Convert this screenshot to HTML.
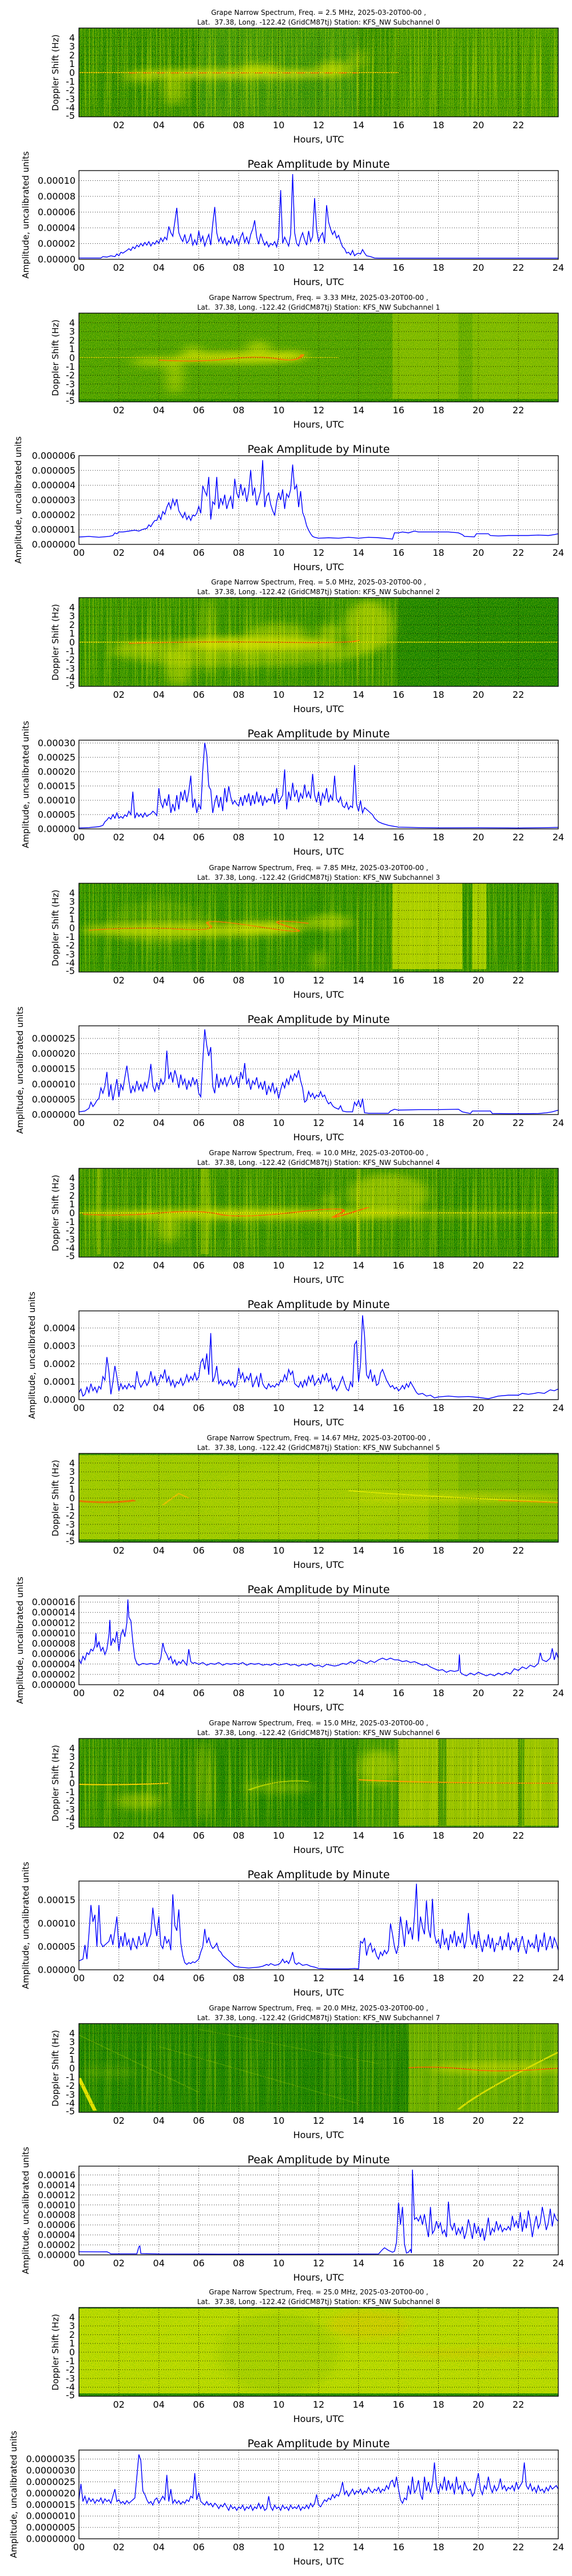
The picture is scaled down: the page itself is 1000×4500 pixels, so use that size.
<!DOCTYPE html>
<html><head><meta charset="utf-8"><style>
html,body{margin:0;padding:0;background:#fff;}
svg{display:block}
text{font-family:"DejaVu Sans","Liberation Sans",sans-serif;fill:#000}
.t1{font-size:12px;text-anchor:middle}
.pt{font-size:19px;text-anchor:middle}
.tk{font-size:16px}
.ye{text-anchor:end}
.xm{text-anchor:middle}
.lb{font-size:15px;text-anchor:middle;dominant-baseline:central}
.hu{font-size:16px;text-anchor:middle}
.g{stroke:#000;stroke-dasharray:1 3;stroke-width:1;fill:none;opacity:.85}
.fr{fill:none;stroke:#000;stroke-width:1.3}
.ln{fill:none;stroke:#0000ff;stroke-width:1.4}
</style></head><body>
<svg width="1000" height="4500" viewBox="0 0 1000 4500" xmlns="http://www.w3.org/2000/svg">
<defs>
<filter id="bl" x="-50%" y="-50%" width="200%" height="200%"><feGaussianBlur stdDeviation="3 6"/></filter>
<filter id="nY" filterUnits="objectBoundingBox" x="0" y="0" width="1" height="1"><feTurbulence type="fractalNoise" baseFrequency="0.8" numOctaves="1" seed="3"/><feColorMatrix values="0 0 0 0 0.85  0 0 0 0 0.87  0 0 0 0 0  2.6 0 0 0 -1.1"/></filter>
<filter id="nG" filterUnits="objectBoundingBox" x="0" y="0" width="1" height="1"><feTurbulence type="fractalNoise" baseFrequency="0.8" numOctaves="1" seed="7"/><feColorMatrix values="0 0 0 0 0.05  0 0 0 0 0.45  0 0 0 0 0  2.6 0 0 0 -1.1"/></filter>
<filter id="sY" filterUnits="objectBoundingBox" x="0" y="0" width="1" height="1"><feTurbulence type="fractalNoise" baseFrequency="0.45 0.006" numOctaves="1" seed="11"/><feColorMatrix values="0 0 0 0 0.7  0 0 0 0 0.82  0 0 0 0 0  3 0 0 0 -1.35"/></filter>
</defs>
<rect width="1000" height="4500" fill="#fff"/>

<!-- ================= PAIR 0 ================= -->
<g transform="translate(0,49)">
<text class="t1" x="557" y="-23">Grape Narrow Spectrum, Freq. = 2.5 MHz, 2025-03-20T00-00 ,</text>
<text class="t1" x="557" y="-6">Lat.&#160; 37.38, Long. -122.42 (GridCM87tj) Station: KFS_NW Subchannel 0</text>
<svg x="138" y="0" width="838" height="155" viewBox="0 0 240 155" preserveAspectRatio="none">
<rect width="240" height="155" fill="#167f00"/>
<rect x="60" width="80" height="155" fill="#24890a"/>
<rect x="157" width="83" height="155" fill="#2b8c00"/>
<g filter="url(#bl)">
<ellipse cx="80" cy="80" rx="58" ry="9" fill="#c8dc10" opacity=".75"/>
<ellipse cx="48" cy="105" rx="5" ry="30" fill="#b8d400" opacity=".6"/>
<ellipse cx="90" cy="70" rx="9" ry="8" fill="#d0e000" opacity=".6"/>
<ellipse cx="128" cy="68" rx="9" ry="10" fill="#c8dc00" opacity=".6"/>
<ellipse cx="140" cy="55" rx="3" ry="18" fill="#b8d400" opacity=".5"/>
<ellipse cx="30" cy="88" rx="8" ry="8" fill="#a0c800" opacity=".5"/>
</g>
<rect x="0" y="77" width="160" height="1.5" fill="#ffd000"/>
<path d="M25 78.5H140" stroke="#ff5a00" stroke-width="1.5" stroke-dasharray="4 3"/>
</svg>
<rect x="138" width="838" height="155" filter="url(#sY)" opacity=".5"/>
<rect x="138" width="838" height="155" filter="url(#nY)" opacity=".6"/>
<g transform="translate(138,0)"><path class="g" d="M69.8 0V155M139.7 0V155M209.5 0V155M279.3 0V155M349.2 0V155M419 0V155M488.8 0V155M558.7 0V155M628.5 0V155M698.3 0V155M768.2 0V155M0 16.8H838M0 32.1H838M0 47.4H838M0 62.7H838M0 78H838M0 93.3H838M0 108.6H838M0 123.9H838M0 139.2H838"/></g>
<rect class="fr" x="138" y="0" width="838" height="155"/>
<g class="tk ye"><text x="131" y="22.3">4</text><text x="131" y="37.6">3</text><text x="131" y="52.9">2</text><text x="131" y="68.2">1</text><text x="131" y="83.5">0</text><text x="131" y="98.8">-1</text><text x="131" y="114.1">-2</text><text x="131" y="129.4">-3</text><text x="131" y="144.7">-4</text><text x="131" y="158.5">-5</text></g>
<g class="tk xm"><text x="207.8" y="175">02</text><text x="277.7" y="175">04</text><text x="347.5" y="175">06</text><text x="417.3" y="175">08</text><text x="487.2" y="175">10</text><text x="557" y="175">12</text><text x="626.8" y="175">14</text><text x="696.7" y="175">16</text><text x="766.5" y="175">18</text><text x="836.3" y="175">20</text><text x="906.2" y="175">22</text></g>
<text class="hu" x="557" y="200">Hours, UTC</text>
<text class="lb" transform="translate(97,78) rotate(-90)">Doppler Shift (Hz)</text>
<g transform="translate(0,249)">
<text class="pt" x="557" y="-5">Peak Amplitude by Minute</text>
<rect x="138" width="838" height="155" fill="#fff"/>
<g transform="translate(138,0)"><path class="g" d="M69.8 0V155M139.7 0V155M209.5 0V155M279.3 0V155M349.2 0V155M419 0V155M488.8 0V155M558.7 0V155M628.5 0V155M698.3 0V155M768.2 0V155M0 127.5H838M0 100H838M0 72.5H838M0 45H838M0 17.5H838"/></g>
<svg x="138" y="0" width="838" height="155" viewBox="0 0 240 100" preserveAspectRatio="none"><polyline class="ln" vector-effect="non-scaling-stroke" points="0,98.5 11,98.5 12,97 14,97.5 16,96 18,97 19,94 20,96 21,92 22,93 24,90 25,88 26,90 27,86 28,88 29,84 30,86 31,82 32,85 33,81 34,84 35,80 36,85 37,81 38,83 39,79 40,82 41,76 42,80 43,75 44,78 45,63 46,70 47,74 48,58 49,42 50,70 51,76 52,80 53,72 54,82 55,79 56,71 57,84 58,78 59,84 60,68 61,80 62,74 63,85 64,78 65,72 66,84 67,60 68,41 69,70 70,80 71,75 72,82 73,76 74,84 75,79 76,82 77,73 78,82 79,77 80,84 81,75 82,70 83,81 84,75 85,83 86,72 87,66 88,56 89,75 90,83 91,71 92,78 93,84 94,80 95,86 96,82 97,84 98,80 99,86 100,75 101,22 102,82 103,75 104,80 105,85 106,72 107,4 108,70 109,82 110,85 111,76 112,70 113,78 114,84 115,68 116,80 117,74 118,31 119,66 120,80 121,74 122,70 123,82 124,39 125,58 126,66 127,72 128,68 129,76 130,73 131,80 132,86 133,88 134,93 135,92 136,95 137,90 138,96 139,94 140,93 141,94 142,89 143,93 144,96 146,97 148,98.5 150,98.7 240,98.7"/></svg>
<rect class="fr" x="138" y="0" width="838" height="155"/>
<g class="tk ye"><text x="132" y="160.5">0.00000</text><text x="132" y="133">0.00002</text><text x="132" y="105.5">0.00004</text><text x="132" y="78">0.00006</text><text x="132" y="50.5">0.00008</text><text x="132" y="23">0.00010</text></g>
<g class="tk xm"><text x="138" y="175">00</text><text x="207.8" y="175">02</text><text x="277.7" y="175">04</text><text x="347.5" y="175">06</text><text x="417.3" y="175">08</text><text x="487.2" y="175">10</text><text x="557" y="175">12</text><text x="626.8" y="175">14</text><text x="696.7" y="175">16</text><text x="766.5" y="175">18</text><text x="836.3" y="175">20</text><text x="906.2" y="175">22</text><text x="976" y="175">24</text></g>
<text class="hu" x="557" y="200">Hours, UTC</text>
<text class="lb" transform="translate(45,77.5) rotate(-90)">Amplitude, uncalibrated units</text>
</g>
</g>

<!-- ================= PAIR 1 ================= -->
<g transform="translate(0,547)">
<text class="t1" x="557" y="-23">Grape Narrow Spectrum, Freq. = 3.33 MHz, 2025-03-20T00-00 ,</text>
<text class="t1" x="557" y="-6">Lat.&#160; 37.38, Long. -122.42 (GridCM87tj) Station: KFS_NW Subchannel 1</text>
<svg x="138" y="0" width="838" height="155" viewBox="0 0 240 155" preserveAspectRatio="none">
<rect width="240" height="155" fill="#3f9700"/>
<rect x="157" width="83" height="155" fill="#78b400"/>
<rect x="190" width="7" height="155" fill="#5aa400"/>
<g filter="url(#bl)">
<ellipse cx="40" cy="85" rx="14" ry="8" fill="#c0d800" opacity=".7"/>
<ellipse cx="48" cy="110" rx="4" ry="32" fill="#c8dc00" opacity=".6"/>
<ellipse cx="80" cy="78" rx="32" ry="10" fill="#e0e400" opacity=".8"/>
<ellipse cx="90" cy="62" rx="6" ry="14" fill="#d4e000" opacity=".6"/>
<ellipse cx="57" cy="68" rx="5" ry="12" fill="#c8dc00" opacity=".6"/>
<ellipse cx="105" cy="74" rx="10" ry="8" fill="#e0e400" opacity=".7"/>
</g>
<rect x="0" y="150" width="240" height="5" fill="#127a00"/>
<rect x="0" y="77" width="130" height="1" fill="#e8e000"/>
<path d="M40 82Q60 86 75 80T100 80T112 72" stroke="#ff7000" stroke-width="2" fill="none"/>
</svg>
<rect x="138" width="838" height="155" filter="url(#nY)" opacity=".6"/>
<rect x="138" width="838" height="155" filter="url(#nG)" opacity=".4"/>
<g transform="translate(138,0)"><path class="g" d="M69.8 0V155M139.7 0V155M209.5 0V155M279.3 0V155M349.2 0V155M419 0V155M488.8 0V155M558.7 0V155M628.5 0V155M698.3 0V155M768.2 0V155M0 16.8H838M0 32.1H838M0 47.4H838M0 62.7H838M0 78H838M0 93.3H838M0 108.6H838M0 123.9H838M0 139.2H838"/></g>
<rect class="fr" x="138" y="0" width="838" height="155"/>
<g class="tk ye"><text x="131" y="22.3">4</text><text x="131" y="37.6">3</text><text x="131" y="52.9">2</text><text x="131" y="68.2">1</text><text x="131" y="83.5">0</text><text x="131" y="98.8">-1</text><text x="131" y="114.1">-2</text><text x="131" y="129.4">-3</text><text x="131" y="144.7">-4</text><text x="131" y="158.5">-5</text></g>
<g class="tk xm"><text x="207.8" y="175">02</text><text x="277.7" y="175">04</text><text x="347.5" y="175">06</text><text x="417.3" y="175">08</text><text x="487.2" y="175">10</text><text x="557" y="175">12</text><text x="626.8" y="175">14</text><text x="696.7" y="175">16</text><text x="766.5" y="175">18</text><text x="836.3" y="175">20</text><text x="906.2" y="175">22</text></g>
<text class="hu" x="557" y="200">Hours, UTC</text>
<text class="lb" transform="translate(97,78) rotate(-90)">Doppler Shift (Hz)</text>
<g transform="translate(0,249)">
<text class="pt" x="557" y="-5">Peak Amplitude by Minute</text>
<rect x="138" width="838" height="155" fill="#fff"/>
<g transform="translate(138,0)"><path class="g" d="M69.8 0V155M139.7 0V155M209.5 0V155M279.3 0V155M349.2 0V155M419 0V155M488.8 0V155M558.7 0V155M628.5 0V155M698.3 0V155M768.2 0V155M0 129.2H838M0 103.3H838M0 77.5H838M0 51.7H838M0 25.8H838"/></g>
<svg x="138" y="0" width="838" height="155" viewBox="0 0 240 100" preserveAspectRatio="none"><polyline class="ln" vector-effect="non-scaling-stroke" points="0,91.7 5,91 10,92 15,91 17,90 18,87 19,88 20,86 22,86 25,85 28,84 30,85 32,83 34,82 35,78 36,80 37,76 38,73 39,73 40,67 41,72 42,63 43,66 44,58 45,53 46,60 47,49 48,56 49,49 50,62 51,66 52,70 53,64 54,72 55,68 56,73 57,67 58,68 59,65 60,57 61,65 62,34 63,40 64,45 65,24 66,72 67,52 68,55 69,24 70,60 71,48 72,55 73,44 74,60 75,52 76,46 77,60 78,26 79,42 80,48 81,32 82,45 83,36 84,52 85,40 86,16 87,45 88,36 89,56 90,48 91,40 92,5 93,58 94,46 95,42 96,55 97,62 98,67 99,52 100,42 101,50 102,38 103,60 104,43 105,47 106,38 107,10 108,38 109,33 110,58 111,40 112,64 113,70 114,79 115,84 116,88 117,91 118,92 120,93 125,92.5 130,93 135,92 140,93 145,92 150,92.5 155,93.5 157,94 158,87 160,87 162,86 165,87 168,85 170,86 175,86 180,86 185,86 190,87 192,89 193,91 198,91.5 199,88 205,88 206,90 210,90.5 215,90 220,90 225,90 230,89.5 235,90 238,89 240,88"/></svg>
<rect class="fr" x="138" y="0" width="838" height="155"/>
<g class="tk ye"><text x="132" y="160.5">0.000000</text><text x="132" y="134.7">0.000001</text><text x="132" y="108.8">0.000002</text><text x="132" y="83">0.000003</text><text x="132" y="57.2">0.000004</text><text x="132" y="31.3">0.000005</text><text x="132" y="5.5">0.000006</text></g>
<g class="tk xm"><text x="138" y="175">00</text><text x="207.8" y="175">02</text><text x="277.7" y="175">04</text><text x="347.5" y="175">06</text><text x="417.3" y="175">08</text><text x="487.2" y="175">10</text><text x="557" y="175">12</text><text x="626.8" y="175">14</text><text x="696.7" y="175">16</text><text x="766.5" y="175">18</text><text x="836.3" y="175">20</text><text x="906.2" y="175">22</text><text x="976" y="175">24</text></g>
<text class="hu" x="557" y="200">Hours, UTC</text>
<text class="lb" transform="translate(32,77.5) rotate(-90)">Amplitude, uncalibrated units</text>
</g>
</g>

<!-- ================= PAIR 2 ================= -->
<g transform="translate(0,1044)">
<text class="t1" x="557" y="-23">Grape Narrow Spectrum, Freq. = 5.0 MHz, 2025-03-20T00-00 ,</text>
<text class="t1" x="557" y="-6">Lat.&#160; 37.38, Long. -122.42 (GridCM87tj) Station: KFS_NW Subchannel 2</text>
<svg x="138" y="0" width="838" height="155" viewBox="0 0 240 155" preserveAspectRatio="none">
<rect width="240" height="155" fill="#107e00"/>
<rect x="0" width="160" height="155" fill="#1d8600"/>
<g filter="url(#bl)">
<ellipse cx="80" cy="95" rx="65" ry="25" fill="#9cc600" opacity=".6"/>
<ellipse cx="50" cy="120" rx="6" ry="35" fill="#c0d800" opacity=".6"/>
<ellipse cx="65" cy="70" rx="3" ry="70" fill="#a8cc00" opacity=".5"/>
<ellipse cx="90" cy="80" rx="40" ry="12" fill="#e0e400" opacity=".7"/>
<ellipse cx="100" cy="60" rx="15" ry="15" fill="#b4d000" opacity=".5"/>
<ellipse cx="145" cy="50" rx="12" ry="45" fill="#c8dc00" opacity=".6"/>
<ellipse cx="125" cy="60" rx="6" ry="14" fill="#c0d800" opacity=".5"/>
<ellipse cx="30" cy="85" rx="12" ry="10" fill="#a8cc00" opacity=".5"/>
</g>
<rect x="0" y="77" width="240" height="1.5" fill="#e8e800"/>
<path d="M25 80Q60 76 100 78T140 74" stroke="#ff6000" stroke-width="1.5" fill="none"/>
</svg>
<rect x="138" width="558" height="155" filter="url(#sY)" opacity=".5"/>
<rect x="138" width="838" height="155" filter="url(#nY)" opacity=".5"/>
<g transform="translate(138,0)"><path class="g" d="M69.8 0V155M139.7 0V155M209.5 0V155M279.3 0V155M349.2 0V155M419 0V155M488.8 0V155M558.7 0V155M628.5 0V155M698.3 0V155M768.2 0V155M0 16.8H838M0 32.1H838M0 47.4H838M0 62.7H838M0 78H838M0 93.3H838M0 108.6H838M0 123.9H838M0 139.2H838"/></g>
<rect class="fr" x="138" y="0" width="838" height="155"/>
<g class="tk ye"><text x="131" y="22.3">4</text><text x="131" y="37.6">3</text><text x="131" y="52.9">2</text><text x="131" y="68.2">1</text><text x="131" y="83.5">0</text><text x="131" y="98.8">-1</text><text x="131" y="114.1">-2</text><text x="131" y="129.4">-3</text><text x="131" y="144.7">-4</text><text x="131" y="158.5">-5</text></g>
<g class="tk xm"><text x="207.8" y="175">02</text><text x="277.7" y="175">04</text><text x="347.5" y="175">06</text><text x="417.3" y="175">08</text><text x="487.2" y="175">10</text><text x="557" y="175">12</text><text x="626.8" y="175">14</text><text x="696.7" y="175">16</text><text x="766.5" y="175">18</text><text x="836.3" y="175">20</text><text x="906.2" y="175">22</text></g>
<text class="hu" x="557" y="200">Hours, UTC</text>
<text class="lb" transform="translate(97,78) rotate(-90)">Doppler Shift (Hz)</text>
<g transform="translate(0,249)">
<text class="pt" x="557" y="-5">Peak Amplitude by Minute</text>
<rect x="138" width="838" height="155" fill="#fff"/>
<g transform="translate(138,0)"><path class="g" d="M69.8 0V155M139.7 0V155M209.5 0V155M279.3 0V155M349.2 0V155M419 0V155M488.8 0V155M558.7 0V155M628.5 0V155M698.3 0V155M768.2 0V155M0 130H838M0 105H838M0 80H838M0 55H838M0 30H838M0 5H838"/></g>
<svg x="138" y="0" width="838" height="155" viewBox="0 0 240 100" preserveAspectRatio="none"><polyline class="ln" vector-effect="non-scaling-stroke" points="0,99 5,98.5 10,97.5 12,96 13,92 14,90 15,87 16,89 17,84 18,88 19,82 20,88 21,86 22,88 23,84 24,86 25,80 26,84 27,58 28,88 29,82 30,86 31,83 32,87 33,82 34,86 35,84 36,83 37,80 38,82 39,85 40,54 41,70 42,76 43,66 44,74 45,61 46,82 47,72 48,80 49,62 50,78 51,58 52,68 53,56 54,70 55,58 56,40 57,76 58,66 59,82 60,72 61,78 62,34 63,3 64,16 65,52 66,56 67,82 68,70 69,62 70,76 71,64 72,80 73,54 74,70 75,52 76,64 77,72 78,68 79,72 80,74 81,64 82,74 83,62 84,70 85,60 86,74 87,62 88,72 89,58 90,70 91,62 92,74 93,64 94,70 95,66 96,68 97,60 98,72 99,54 100,70 101,66 102,62 103,33 104,78 105,58 106,68 107,48 108,64 109,56 110,70 111,60 112,66 113,50 114,64 115,58 116,66 117,38 118,62 119,70 120,58 121,74 122,60 123,66 124,54 125,70 126,62 127,68 128,40 129,66 130,70 131,64 132,74 133,76 134,70 135,78 136,74 137,76 138,28 139,72 140,80 141,68 142,82 143,76 144,78 145,80 146,82 147,84 148,88 149,90 150,92 152,94 155,96 160,98 170,98.5 180,98.8 200,98.7 220,99 235,98.5 240,98.3"/></svg>
<rect class="fr" x="138" y="0" width="838" height="155"/>
<g class="tk ye"><text x="132" y="160.5">0.00000</text><text x="132" y="135.5">0.00005</text><text x="132" y="110.5">0.00010</text><text x="132" y="85.5">0.00015</text><text x="132" y="60.5">0.00020</text><text x="132" y="35.5">0.00025</text><text x="132" y="10.5">0.00030</text></g>
<g class="tk xm"><text x="138" y="175">00</text><text x="207.8" y="175">02</text><text x="277.7" y="175">04</text><text x="347.5" y="175">06</text><text x="417.3" y="175">08</text><text x="487.2" y="175">10</text><text x="557" y="175">12</text><text x="626.8" y="175">14</text><text x="696.7" y="175">16</text><text x="766.5" y="175">18</text><text x="836.3" y="175">20</text><text x="906.2" y="175">22</text><text x="976" y="175">24</text></g>
<text class="hu" x="557" y="200">Hours, UTC</text>
<text class="lb" transform="translate(45,77.5) rotate(-90)">Amplitude, uncalibrated units</text>
</g>
</g>

<!-- ================= PAIR 3 ================= -->
<g transform="translate(0,1543)">
<text class="t1" x="557" y="-23">Grape Narrow Spectrum, Freq. = 7.85 MHz, 2025-03-20T00-00 ,</text>
<text class="t1" x="557" y="-6">Lat.&#160; 37.38, Long. -122.42 (GridCM87tj) Station: KFS_NW Subchannel 3</text>
<svg x="138" y="0" width="838" height="155" viewBox="0 0 240 155" preserveAspectRatio="none">
<rect width="240" height="155" fill="#178100"/>
<g filter="url(#bl)">
<ellipse cx="40" cy="70" rx="25" ry="40" fill="#6aa800" opacity=".4"/>
<ellipse cx="55" cy="82" rx="55" ry="12" fill="#d0dc00" opacity=".75"/>
<ellipse cx="95" cy="76" rx="20" ry="10" fill="#d8e000" opacity=".7"/>
<ellipse cx="125" cy="68" rx="12" ry="14" fill="#c8dc00" opacity=".6"/>
<ellipse cx="120" cy="135" rx="3" ry="18" fill="#c0d800" opacity=".6"/>
</g>
<rect x="157" y="0" width="35" height="150" fill="#aacc00"/>
<rect x="197" y="0" width="7" height="150" fill="#9cc600"/>
<path d="M5 82Q30 76 50 80T65 72T90 76T105 76T115 70" stroke="#ff6000" stroke-width="1.5" fill="none"/>
</svg>
<rect x="138" width="838" height="155" filter="url(#sY)" opacity=".5"/>
<rect x="138" width="838" height="155" filter="url(#nY)" opacity=".5"/>
<rect x="138" width="838" height="155" filter="url(#nG)" opacity=".3"/>
<g transform="translate(138,0)"><path class="g" d="M69.8 0V155M139.7 0V155M209.5 0V155M279.3 0V155M349.2 0V155M419 0V155M488.8 0V155M558.7 0V155M628.5 0V155M698.3 0V155M768.2 0V155M0 16.8H838M0 32.1H838M0 47.4H838M0 62.7H838M0 78H838M0 93.3H838M0 108.6H838M0 123.9H838M0 139.2H838"/></g>
<rect class="fr" x="138" y="0" width="838" height="155"/>
<g class="tk ye"><text x="131" y="22.3">4</text><text x="131" y="37.6">3</text><text x="131" y="52.9">2</text><text x="131" y="68.2">1</text><text x="131" y="83.5">0</text><text x="131" y="98.8">-1</text><text x="131" y="114.1">-2</text><text x="131" y="129.4">-3</text><text x="131" y="144.7">-4</text><text x="131" y="158.5">-5</text></g>
<g class="tk xm"><text x="207.8" y="175">02</text><text x="277.7" y="175">04</text><text x="347.5" y="175">06</text><text x="417.3" y="175">08</text><text x="487.2" y="175">10</text><text x="557" y="175">12</text><text x="626.8" y="175">14</text><text x="696.7" y="175">16</text><text x="766.5" y="175">18</text><text x="836.3" y="175">20</text><text x="906.2" y="175">22</text></g>
<text class="hu" x="557" y="200">Hours, UTC</text>
<text class="lb" transform="translate(97,78) rotate(-90)">Doppler Shift (Hz)</text>
<g transform="translate(0,249)">
<text class="pt" x="557" y="-5">Peak Amplitude by Minute</text>
<rect x="138" width="838" height="155" fill="#fff"/>
<g transform="translate(138,0)"><path class="g" d="M69.8 0V155M139.7 0V155M209.5 0V155M279.3 0V155M349.2 0V155M419 0V155M488.8 0V155M558.7 0V155M628.5 0V155M698.3 0V155M768.2 0V155M0 128.4H838M0 101.8H838M0 75.2H838M0 48.6H838M0 22H838"/></g>
<svg x="138" y="0" width="838" height="155" viewBox="0 0 240 100" preserveAspectRatio="none"><polyline class="ln" vector-effect="non-scaling-stroke" points="0,97 3,96 5,93 6,86 7,91 8,88 9,84 10,82 11,70 12,76 13,68 14,52 15,80 16,66 17,84 18,72 19,60 20,80 21,66 22,72 23,58 24,45 25,62 26,76 27,68 28,74 29,62 30,72 31,66 32,74 33,64 34,70 35,60 36,43 37,68 38,74 39,64 40,72 41,60 42,66 43,62 44,28 45,60 46,52 47,64 48,50 49,58 50,70 51,55 52,66 53,60 54,72 55,62 56,68 57,58 58,66 59,60 60,76 61,80 62,40 63,4 64,22 65,34 66,24 67,68 68,76 69,54 70,70 71,60 72,66 73,58 74,68 75,62 76,56 77,66 78,64 79,58 80,70 81,52 82,60 83,42 84,66 85,60 86,72 87,62 88,66 89,58 90,70 91,64 92,72 93,62 94,78 95,68 96,74 97,64 98,76 99,70 100,82 101,72 102,64 103,70 104,60 105,66 106,56 107,62 108,54 109,58 110,50 111,62 112,70 113,86 114,84 115,74 116,80 117,76 118,82 119,78 120,80 121,74 122,80 123,78 124,84 125,88 126,86 127,90 128,92 130,94 131,90 132,96 134,97 137,97 138,86 139,90 140,84 141,92 142,82 143,98 145,98.5 150,98.5 155,98.5 156,96 158,94 160,95 170,94.5 180,94.5 190,94 192,97 196,98.8 197,96 206,96 207,98.8 215,99 225,99 230,98.8 234,98 237,97 240,95"/></svg>
<rect class="fr" x="138" y="0" width="838" height="155"/>
<g class="tk ye"><text x="132" y="160.5">0.000000</text><text x="132" y="133.9">0.000005</text><text x="132" y="107.3">0.000010</text><text x="132" y="80.7">0.000015</text><text x="132" y="54.1">0.000020</text><text x="132" y="27.5">0.000025</text></g>
<g class="tk xm"><text x="138" y="175">00</text><text x="207.8" y="175">02</text><text x="277.7" y="175">04</text><text x="347.5" y="175">06</text><text x="417.3" y="175">08</text><text x="487.2" y="175">10</text><text x="557" y="175">12</text><text x="626.8" y="175">14</text><text x="696.7" y="175">16</text><text x="766.5" y="175">18</text><text x="836.3" y="175">20</text><text x="906.2" y="175">22</text><text x="976" y="175">24</text></g>
<text class="hu" x="557" y="200">Hours, UTC</text>
<text class="lb" transform="translate(35,77.5) rotate(-90)">Amplitude, uncalibrated units</text>
</g>
</g>

<!-- ================= PAIR 4 ================= -->
<g transform="translate(0,2041)">
<text class="t1" x="557" y="-23">Grape Narrow Spectrum, Freq. = 10.0 MHz, 2025-03-20T00-00 ,</text>
<text class="t1" x="557" y="-6">Lat.&#160; 37.38, Long. -122.42 (GridCM87tj) Station: KFS_NW Subchannel 4</text>
<svg x="138" y="0" width="838" height="155" viewBox="0 0 240 155" preserveAspectRatio="none">
<rect width="240" height="155" fill="#178200"/>
<rect x="0" width="180" height="155" fill="#218700"/>
<g filter="url(#bl)">
<ellipse cx="90" cy="80" rx="90" ry="9" fill="#d8e000" opacity=".8"/>
<ellipse cx="200" cy="80" rx="40" ry="4" fill="#d0dc00" opacity=".6"/>
<ellipse cx="45" cy="105" rx="6" ry="25" fill="#b8d400" opacity=".55"/>
<ellipse cx="155" cy="45" rx="20" ry="35" fill="#b8d400" opacity=".55"/>
<ellipse cx="125" cy="55" rx="4" ry="10" fill="#b0d000" opacity=".4"/>
</g>
<rect x="9" width="2" height="150" fill="#a8cc00" opacity=".5"/>
<rect x="61" width="4" height="150" fill="#a8cc00" opacity=".5"/>
<rect x="139" width="2" height="150" fill="#a8cc00" opacity=".5"/>
<rect x="0" y="77" width="240" height="1.5" fill="#f0f000"/>
<path d="M2 80Q20 84 40 78T70 80T110 76T130 80T145 68" stroke="#ff5000" stroke-width="1.5" fill="none"/>
</svg>
<rect x="138" width="838" height="155" filter="url(#sY)" opacity=".5"/>
<rect x="138" width="838" height="155" filter="url(#nY)" opacity=".5"/>
<g transform="translate(138,0)"><path class="g" d="M69.8 0V155M139.7 0V155M209.5 0V155M279.3 0V155M349.2 0V155M419 0V155M488.8 0V155M558.7 0V155M628.5 0V155M698.3 0V155M768.2 0V155M0 16.8H838M0 32.1H838M0 47.4H838M0 62.7H838M0 78H838M0 93.3H838M0 108.6H838M0 123.9H838M0 139.2H838"/></g>
<rect class="fr" x="138" y="0" width="838" height="155"/>
<g class="tk ye"><text x="131" y="22.3">4</text><text x="131" y="37.6">3</text><text x="131" y="52.9">2</text><text x="131" y="68.2">1</text><text x="131" y="83.5">0</text><text x="131" y="98.8">-1</text><text x="131" y="114.1">-2</text><text x="131" y="129.4">-3</text><text x="131" y="144.7">-4</text><text x="131" y="158.5">-5</text></g>
<g class="tk xm"><text x="207.8" y="175">02</text><text x="277.7" y="175">04</text><text x="347.5" y="175">06</text><text x="417.3" y="175">08</text><text x="487.2" y="175">10</text><text x="557" y="175">12</text><text x="626.8" y="175">14</text><text x="696.7" y="175">16</text><text x="766.5" y="175">18</text><text x="836.3" y="175">20</text><text x="906.2" y="175">22</text></g>
<text class="hu" x="557" y="200">Hours, UTC</text>
<text class="lb" transform="translate(97,78) rotate(-90)">Doppler Shift (Hz)</text>
<g transform="translate(0,249)">
<text class="pt" x="557" y="-5">Peak Amplitude by Minute</text>
<rect x="138" width="838" height="155" fill="#fff"/>
<g transform="translate(138,0)"><path class="g" d="M69.8 0V155M139.7 0V155M209.5 0V155M279.3 0V155M349.2 0V155M419 0V155M488.8 0V155M558.7 0V155M628.5 0V155M698.3 0V155M768.2 0V155M0 123.7H838M0 92.5H838M0 61.2H838M0 29.9H838"/></g>
<svg x="138" y="0" width="838" height="155" viewBox="0 0 240 100" preserveAspectRatio="none"><polyline class="ln" vector-effect="non-scaling-stroke" points="0,92 1,88 2,96 3,94 4,86 5,92 6,82 7,90 8,86 9,92 10,85 11,88 12,74 13,78 14,52 15,68 16,94 17,80 18,62 19,74 20,90 21,82 22,88 23,84 24,88 25,82 26,86 27,84 28,88 29,68 30,80 31,86 32,82 33,78 34,84 35,80 36,68 37,80 38,74 39,84 40,80 41,72 42,76 43,66 44,80 45,74 46,84 47,78 48,86 49,80 50,82 51,76 52,84 53,80 54,72 55,80 56,74 57,78 58,70 59,78 60,74 61,58 62,54 63,66 64,48 65,72 66,25 67,80 68,74 69,62 70,82 71,78 72,84 73,80 74,82 75,78 76,84 77,80 78,86 79,82 80,64 81,76 82,70 83,80 84,74 85,78 86,70 87,86 88,80 89,74 90,86 91,70 92,82 93,86 94,88 95,82 96,86 97,84 98,86 99,82 100,84 101,78 102,80 103,72 104,78 105,66 106,72 107,68 108,82 109,84 110,86 111,80 112,86 113,78 114,84 115,74 116,80 117,72 118,84 119,80 120,76 121,82 122,72 123,78 124,70 125,80 126,76 127,88 128,84 129,90 130,86 131,80 132,74 133,82 134,88 135,90 136,80 137,86 138,38 139,34 140,80 141,60 142,5 143,28 144,72 145,76 146,66 147,80 148,72 149,84 150,82 151,70 152,66 153,72 154,78 155,82 156,86 157,84 158,88 159,86 160,90 161,88 162,84 163,88 164,82 165,86 166,80 167,84 168,88 169,92 170,94 172,93 174,96 176,95 178,98 180,97 185,96 190,97 195,96.5 200,97.5 205,99 210,96 215,95 220,95 222,93 225,94 228,93 230,92 233,93 236,89 238,90 240,88"/></svg>
<rect class="fr" x="138" y="0" width="838" height="155"/>
<g class="tk ye"><text x="132" y="160.5">0.0000</text><text x="132" y="129.2">0.0001</text><text x="132" y="98">0.0002</text><text x="132" y="66.7">0.0003</text><text x="132" y="35.4">0.0004</text></g>
<g class="tk xm"><text x="138" y="175">00</text><text x="207.8" y="175">02</text><text x="277.7" y="175">04</text><text x="347.5" y="175">06</text><text x="417.3" y="175">08</text><text x="487.2" y="175">10</text><text x="557" y="175">12</text><text x="626.8" y="175">14</text><text x="696.7" y="175">16</text><text x="766.5" y="175">18</text><text x="836.3" y="175">20</text><text x="906.2" y="175">22</text><text x="976" y="175">24</text></g>
<text class="hu" x="557" y="200">Hours, UTC</text>
<text class="lb" transform="translate(56,77.5) rotate(-90)">Amplitude, uncalibrated units</text>
</g>
</g>

<!-- ================= PAIR 5 ================= -->
<g transform="translate(0,2539)">
<text class="t1" x="557" y="-23">Grape Narrow Spectrum, Freq. = 14.67 MHz, 2025-03-20T00-00 ,</text>
<text class="t1" x="557" y="-6">Lat.&#160; 37.38, Long. -122.42 (GridCM87tj) Station: KFS_NW Subchannel 5</text>
<svg x="138" y="0" width="838" height="155" viewBox="0 0 240 155" preserveAspectRatio="none">
<rect width="240" height="155" fill="#a6ca00"/>
<rect x="175" width="15" height="155" fill="#92c000"/>
<rect x="190" width="50" height="155" fill="#7cb400"/>
<g filter="url(#bl)">
<ellipse cx="110" cy="80" rx="50" ry="60" fill="#b8d400" opacity=".3"/>
<ellipse cx="190" cy="78" rx="55" ry="8" fill="#e0e000" opacity=".6"/>
</g>
<rect x="0" y="0" width="240" height="3" fill="#2a8800"/>
<rect x="0" y="150" width="240" height="5" fill="#1a7c00"/>
<path d="M0 83Q15 88 28 82" stroke="#ff6000" stroke-width="3" fill="none"/>
<path d="M42 90L50 70L55 78" stroke="#f8c000" stroke-width="1.2" fill="none"/>
<path d="M135 65Q170 75 240 85" stroke="#eeee00" stroke-width="2" fill="none"/>
<path d="M210 82L240 86" stroke="#ff8c00" stroke-width="2" fill="none"/>
</svg>
<rect x="138" width="838" height="155" filter="url(#nG)" opacity=".6"/>
<rect x="138" width="838" height="155" filter="url(#nY)" opacity=".4"/>
<g transform="translate(138,0)"><path class="g" d="M69.8 0V155M139.7 0V155M209.5 0V155M279.3 0V155M349.2 0V155M419 0V155M488.8 0V155M558.7 0V155M628.5 0V155M698.3 0V155M768.2 0V155M0 16.8H838M0 32.1H838M0 47.4H838M0 62.7H838M0 78H838M0 93.3H838M0 108.6H838M0 123.9H838M0 139.2H838"/></g>
<rect class="fr" x="138" y="0" width="838" height="155"/>
<g class="tk ye"><text x="131" y="22.3">4</text><text x="131" y="37.6">3</text><text x="131" y="52.9">2</text><text x="131" y="68.2">1</text><text x="131" y="83.5">0</text><text x="131" y="98.8">-1</text><text x="131" y="114.1">-2</text><text x="131" y="129.4">-3</text><text x="131" y="144.7">-4</text><text x="131" y="158.5">-5</text></g>
<g class="tk xm"><text x="207.8" y="175">02</text><text x="277.7" y="175">04</text><text x="347.5" y="175">06</text><text x="417.3" y="175">08</text><text x="487.2" y="175">10</text><text x="557" y="175">12</text><text x="626.8" y="175">14</text><text x="696.7" y="175">16</text><text x="766.5" y="175">18</text><text x="836.3" y="175">20</text><text x="906.2" y="175">22</text></g>
<text class="hu" x="557" y="200">Hours, UTC</text>
<text class="lb" transform="translate(97,78) rotate(-90)">Doppler Shift (Hz)</text>
<g transform="translate(0,249)">
<text class="pt" x="557" y="-5">Peak Amplitude by Minute</text>
<rect x="138" width="838" height="155" fill="#fff"/>
<g transform="translate(138,0)"><path class="g" d="M69.8 0V155M139.7 0V155M209.5 0V155M279.3 0V155M349.2 0V155M419 0V155M488.8 0V155M558.7 0V155M628.5 0V155M698.3 0V155M768.2 0V155M0 137H838M0 118.9H838M0 100.9H838M0 82.8H838M0 64.8H838M0 46.8H838M0 28.7H838M0 10.7H838"/></g>
<svg x="138" y="0" width="838" height="155" viewBox="0 0 240 100" preserveAspectRatio="none"><polyline class="ln" vector-effect="non-scaling-stroke" points="0,71 1,76 2,68 3,72 4,64 5,66 6,60 7,62 8,56 8.5,42 9,58 10,52 11,62 12,58 13,66 14,60 15,44 15.5,27 16,56 17,48 18,52 19,40 20,62 21,44 22,38 23,46 24,30 24.5,4 25,24 26,28 27,52 28,70 29,76 30,78 32,76 34,77 36,76 38,77 40,76 41,70 42,53 43,62 44,66 45,72 46,68 47,76 48,72 49,78 50,74 51,76 52,72 54,78 55,60 56,74 57,76 58,75 60,77 62,75 64,78 66,76 68,77 70,75 72,78 74,76 76,77 78,76 80,77 82,75 84,78 86,76 88,77 90,76 92,78 94,77 96,78 98,76 100,78 102,77 104,76 106,78 108,77 110,79 112,77 114,78 116,76 118,79 120,78 122,80 124,77 126,78 128,79 130,78 132,76 134,77 136,74 138,76 140,72 142,74 144,76 146,73 148,75 150,72 152,70 154,72 156,70 158,72 160,72 162,74 164,73 166,75 168,74 170,76 172,78 174,77 176,80 178,82 180,84 182,83 184,86 186,84 188,85 190,84 190.5,66 191,86 192,88 194,90 196,87 198,89 200,86 202,88 204,90 206,88 208,90 210,87 212,89 214,86 216,88 218,82 220,84 222,80 224,82 226,78 228,80 230,76 231,64 232,72 234,74 236,70 237,59 238,72 239,64 240,70"/></svg>
<rect class="fr" x="138" y="0" width="838" height="155"/>
<g class="tk ye"><text x="132" y="160.5">0.000000</text><text x="132" y="142.5">0.000002</text><text x="132" y="124.4">0.000004</text><text x="132" y="106.4">0.000006</text><text x="132" y="88.3">0.000008</text><text x="132" y="70.3">0.000010</text><text x="132" y="52.3">0.000012</text><text x="132" y="34.2">0.000014</text><text x="132" y="16.2">0.000016</text></g>
<g class="tk xm"><text x="138" y="175">00</text><text x="207.8" y="175">02</text><text x="277.7" y="175">04</text><text x="347.5" y="175">06</text><text x="417.3" y="175">08</text><text x="487.2" y="175">10</text><text x="557" y="175">12</text><text x="626.8" y="175">14</text><text x="696.7" y="175">16</text><text x="766.5" y="175">18</text><text x="836.3" y="175">20</text><text x="906.2" y="175">22</text><text x="976" y="175">24</text></g>
<text class="hu" x="557" y="200">Hours, UTC</text>
<text class="lb" transform="translate(35,77.5) rotate(-90)">Amplitude, uncalibrated units</text>
</g>
</g>

<!-- ================= PAIR 6 ================= -->
<g transform="translate(0,3037)">
<text class="t1" x="557" y="-23">Grape Narrow Spectrum, Freq. = 15.0 MHz, 2025-03-20T00-00 ,</text>
<text class="t1" x="557" y="-6">Lat.&#160; 37.38, Long. -122.42 (GridCM87tj) Station: KFS_NW Subchannel 6</text>
<svg x="138" y="0" width="838" height="155" viewBox="0 0 240 155" preserveAspectRatio="none">
<rect width="240" height="155" fill="#0f7c00"/>
<rect x="0" width="50" height="155" fill="#1d8500"/>
<rect x="140" width="100" height="155" fill="#2a8e00"/>
<rect x="160" y="0" width="80" height="152" fill="#8cbc00"/>
<rect x="180" width="4" height="155" fill="#3a9200"/>
<rect x="220" width="3" height="155" fill="#3a9200"/>
<g filter="url(#bl)">
<ellipse cx="30" cy="110" rx="12" ry="14" fill="#b4d000" opacity=".5"/>
<ellipse cx="62" cy="75" rx="4" ry="70" fill="#8cbc00" opacity=".5"/>
<ellipse cx="100" cy="85" rx="18" ry="10" fill="#a8cc00" opacity=".4"/>
<ellipse cx="150" cy="50" rx="10" ry="30" fill="#c8dc00" opacity=".5"/>
</g>
<path d="M0 80Q20 82 45 78" stroke="#ffcc00" stroke-width="2" fill="none"/>
<path d="M140 72Q170 78 240 78" stroke="#ff9000" stroke-width="2" fill="none"/>
<path d="M85 90Q100 70 115 75" stroke="#b0d000" stroke-width="1.5" fill="none"/>
</svg>
<rect x="138" width="838" height="155" filter="url(#sY)" opacity=".5"/>
<rect x="138" width="838" height="155" filter="url(#nY)" opacity=".4"/>
<g transform="translate(138,0)"><path class="g" d="M69.8 0V155M139.7 0V155M209.5 0V155M279.3 0V155M349.2 0V155M419 0V155M488.8 0V155M558.7 0V155M628.5 0V155M698.3 0V155M768.2 0V155M0 16.8H838M0 32.1H838M0 47.4H838M0 62.7H838M0 78H838M0 93.3H838M0 108.6H838M0 123.9H838M0 139.2H838"/></g>
<rect class="fr" x="138" y="0" width="838" height="155"/>
<g class="tk ye"><text x="131" y="22.3">4</text><text x="131" y="37.6">3</text><text x="131" y="52.9">2</text><text x="131" y="68.2">1</text><text x="131" y="83.5">0</text><text x="131" y="98.8">-1</text><text x="131" y="114.1">-2</text><text x="131" y="129.4">-3</text><text x="131" y="144.7">-4</text><text x="131" y="158.5">-5</text></g>
<g class="tk xm"><text x="207.8" y="175">02</text><text x="277.7" y="175">04</text><text x="347.5" y="175">06</text><text x="417.3" y="175">08</text><text x="487.2" y="175">10</text><text x="557" y="175">12</text><text x="626.8" y="175">14</text><text x="696.7" y="175">16</text><text x="766.5" y="175">18</text><text x="836.3" y="175">20</text><text x="906.2" y="175">22</text></g>
<text class="hu" x="557" y="200">Hours, UTC</text>
<text class="lb" transform="translate(97,78) rotate(-90)">Doppler Shift (Hz)</text>
<g transform="translate(0,249)">
<text class="pt" x="557" y="-5">Peak Amplitude by Minute</text>
<rect x="138" width="838" height="155" fill="#fff"/>
<g transform="translate(138,0)"><path class="g" d="M69.8 0V155M139.7 0V155M209.5 0V155M279.3 0V155M349.2 0V155M419 0V155M488.8 0V155M558.7 0V155M628.5 0V155M698.3 0V155M768.2 0V155M0 114.4H838M0 73.8H838M0 33.2H838"/></g>
<svg x="138" y="0" width="838" height="155" viewBox="0 0 240 100" preserveAspectRatio="none"><polyline class="ln" vector-effect="non-scaling-stroke" points="0,90 2,88 3,72 4,88 5,60 6,27 7,46 8,38 9,74 10,27 11,70 12,74 13,72 14,70 15,68 16,60 17,72 18,56 19,40 20,76 21,62 22,74 23,58 24,72 25,66 26,78 27,64 28,72 29,76 30,62 31,72 32,70 33,58 34,74 35,66 36,60 37,30 38,50 39,62 40,40 41,72 42,76 43,62 44,70 45,66 46,78 47,15 48,50 49,56 50,32 51,70 52,84 53,92 54,94 55,92 56,93 57,91 58,92 59,90 60,88 61,80 62,74 63,54 64,70 65,64 66,72 67,76 68,74 69,70 70,78 71,80 72,84 73,86 74,88 75,90 76,92 77,94 78,96 80,97 85,98 90,97 92,96 94,94 95,95 96,93 98,95 100,94 101,92 102,88 103,92 104,90 105,93 106,88 107,80 108,92 109,94 110,92 112,95 114,94 116,96 118,97 120,98.5 125,99 130,99 135,99 138,98.5 140,99 141,68 142,70 143,64 144,84 145,74 146,70 147,80 148,76 149,84 150,88 151,80 152,84 153,78 154,82 155,78 156,48 157,60 158,74 159,82 160,72 161,40 162,56 163,74 164,44 165,60 166,52 167,66 168,40 169,3 170,68 171,40 172,52 173,60 174,22 175,54 176,64 177,20 178,60 179,70 180,66 181,76 182,54 183,72 184,64 185,78 186,60 187,70 188,56 189,74 190,62 191,70 192,58 193,76 194,66 195,36 196,64 197,72 198,60 199,76 200,56 201,70 202,80 203,66 204,74 205,60 206,76 207,64 208,80 209,70 210,72 211,62 212,78 213,66 214,74 215,58 216,78 217,68 218,72 219,64 220,80 221,70 222,62 223,74 224,82 225,66 226,74 227,70 228,76 229,60 230,80 231,66 232,74 233,58 234,78 235,70 236,62 237,76 238,64 239,70 240,78"/></svg>
<rect class="fr" x="138" y="0" width="838" height="155"/>
<g class="tk ye"><text x="132" y="160.5">0.00000</text><text x="132" y="119.9">0.00005</text><text x="132" y="79.3">0.00010</text><text x="132" y="38.7">0.00015</text></g>
<g class="tk xm"><text x="138" y="175">00</text><text x="207.8" y="175">02</text><text x="277.7" y="175">04</text><text x="347.5" y="175">06</text><text x="417.3" y="175">08</text><text x="487.2" y="175">10</text><text x="557" y="175">12</text><text x="626.8" y="175">14</text><text x="696.7" y="175">16</text><text x="766.5" y="175">18</text><text x="836.3" y="175">20</text><text x="906.2" y="175">22</text><text x="976" y="175">24</text></g>
<text class="hu" x="557" y="200">Hours, UTC</text>
<text class="lb" transform="translate(45,77.5) rotate(-90)">Amplitude, uncalibrated units</text>
</g>
</g>

<!-- ================= PAIR 7 ================= -->
<g transform="translate(0,3535)">
<text class="t1" x="557" y="-23">Grape Narrow Spectrum, Freq. = 20.0 MHz, 2025-03-20T00-00 ,</text>
<text class="t1" x="557" y="-6">Lat.&#160; 37.38, Long. -122.42 (GridCM87tj) Station: KFS_NW Subchannel 7</text>
<svg x="138" y="0" width="838" height="155" viewBox="0 0 240 155" preserveAspectRatio="none">
<rect width="240" height="155" fill="#0e7b00"/>
<rect x="165" width="75" height="155" fill="#5aa600"/>
<g filter="url(#bl)">
<ellipse cx="210" cy="78" rx="35" ry="10" fill="#d8e000" opacity=".5"/>
<ellipse cx="15" cy="85" rx="15" ry="10" fill="#5aa600" opacity=".4"/>
</g>
<path d="M60 10L150 70M40 40L140 140M0 20L60 120" stroke="#3a9400" stroke-width="1" fill="none"/>
<path d="M0 95L8 152" stroke="#e0e000" stroke-width="2" fill="none"/>
<path d="M190 150Q200 120 240 50" stroke="#d0dc00" stroke-width="1.5" fill="none"/>
<path d="M165 77Q180 74 195 80T240 78" stroke="#ff5000" stroke-width="1.5" fill="none"/>
</svg>
<rect x="138" width="838" height="155" filter="url(#sY)" opacity=".35"/>
<rect x="138" width="838" height="155" filter="url(#nY)" opacity=".35"/>
<g transform="translate(138,0)"><path class="g" d="M69.8 0V155M139.7 0V155M209.5 0V155M279.3 0V155M349.2 0V155M419 0V155M488.8 0V155M558.7 0V155M628.5 0V155M698.3 0V155M768.2 0V155M0 16.8H838M0 32.1H838M0 47.4H838M0 62.7H838M0 78H838M0 93.3H838M0 108.6H838M0 123.9H838M0 139.2H838"/></g>
<rect class="fr" x="138" y="0" width="838" height="155"/>
<g class="tk ye"><text x="131" y="22.3">4</text><text x="131" y="37.6">3</text><text x="131" y="52.9">2</text><text x="131" y="68.2">1</text><text x="131" y="83.5">0</text><text x="131" y="98.8">-1</text><text x="131" y="114.1">-2</text><text x="131" y="129.4">-3</text><text x="131" y="144.7">-4</text><text x="131" y="158.5">-5</text></g>
<g class="tk xm"><text x="207.8" y="175">02</text><text x="277.7" y="175">04</text><text x="347.5" y="175">06</text><text x="417.3" y="175">08</text><text x="487.2" y="175">10</text><text x="557" y="175">12</text><text x="626.8" y="175">14</text><text x="696.7" y="175">16</text><text x="766.5" y="175">18</text><text x="836.3" y="175">20</text><text x="906.2" y="175">22</text></g>
<text class="hu" x="557" y="200">Hours, UTC</text>
<text class="lb" transform="translate(97,78) rotate(-90)">Doppler Shift (Hz)</text>
<g transform="translate(0,249)">
<text class="pt" x="557" y="-5">Peak Amplitude by Minute</text>
<rect x="138" width="838" height="155" fill="#fff"/>
<g transform="translate(138,0)"><path class="g" d="M69.8 0V155M139.7 0V155M209.5 0V155M279.3 0V155M349.2 0V155M419 0V155M488.8 0V155M558.7 0V155M628.5 0V155M698.3 0V155M768.2 0V155M0 137.6H838M0 120.1H838M0 102.7H838M0 85.2H838M0 67.8H838M0 50.3H838M0 32.9H838M0 15.4H838"/></g>
<svg x="138" y="0" width="838" height="155" viewBox="0 0 240 100" preserveAspectRatio="none"><polyline class="ln" vector-effect="non-scaling-stroke" points="0,96.5 10,96.6 14,96.5 15,97.5 16,98.9 29,98.9 30,91 30.5,90 31,98.5 40,99 60,99.1 100,99.2 140,99.1 150,99 152,94 153,92 155,95 157,97 158,96 159,86 160,41 161,66 162,46 163,88 164,98 165,97 166,94 166.5,98 167,4 168,60 169,58 170,62 171,56 172,66 173,54 174,68 175,80 176,46 177,76 178,72 179,62 180,70 181,64 182,76 183,72 184,80 185,40 186,66 187,72 188,64 189,78 190,70 191,76 192,68 193,82 194,74 195,60 196,70 197,82 198,64 199,76 200,68 201,80 202,70 203,84 204,72 205,58 206,78 207,70 208,74 209,62 210,72 211,66 212,74 213,70 214,72 215,68 216,72 217,56 218,68 219,62 220,70 221,52 222,74 223,60 224,70 225,50 226,62 227,80 228,66 229,56 230,70 231,64 232,46 233,58 234,72 235,64 236,48 237,68 238,54 239,60 240,62"/></svg>
<rect class="fr" x="138" y="0" width="838" height="155"/>
<g class="tk ye"><text x="132" y="160.5">0.00000</text><text x="132" y="143.1">0.00002</text><text x="132" y="125.6">0.00004</text><text x="132" y="108.2">0.00006</text><text x="132" y="90.7">0.00008</text><text x="132" y="73.3">0.00010</text><text x="132" y="55.8">0.00012</text><text x="132" y="38.4">0.00014</text><text x="132" y="20.9">0.00016</text></g>
<g class="tk xm"><text x="138" y="175">00</text><text x="207.8" y="175">02</text><text x="277.7" y="175">04</text><text x="347.5" y="175">06</text><text x="417.3" y="175">08</text><text x="487.2" y="175">10</text><text x="557" y="175">12</text><text x="626.8" y="175">14</text><text x="696.7" y="175">16</text><text x="766.5" y="175">18</text><text x="836.3" y="175">20</text><text x="906.2" y="175">22</text><text x="976" y="175">24</text></g>
<text class="hu" x="557" y="200">Hours, UTC</text>
<text class="lb" transform="translate(45,77.5) rotate(-90)">Amplitude, uncalibrated units</text>
</g>
</g>

<!-- ================= PAIR 8 ================= -->
<g transform="translate(0,4031)">
<text class="t1" x="557" y="-23">Grape Narrow Spectrum, Freq. = 25.0 MHz, 2025-03-20T00-00 ,</text>
<text class="t1" x="557" y="-6">Lat.&#160; 37.38, Long. -122.42 (GridCM87tj) Station: KFS_NW Subchannel 8</text>
<svg x="138" y="0" width="838" height="155" viewBox="0 0 240 155" preserveAspectRatio="none">
<rect width="240" height="155" fill="#c4dc00"/>
<g filter="url(#bl)">
<ellipse cx="100" cy="80" rx="30" ry="70" fill="#9cc600" opacity=".5"/>
<ellipse cx="145" cy="30" rx="20" ry="25" fill="#f0c000" opacity=".5"/>
<ellipse cx="200" cy="80" rx="40" ry="8" fill="#f0b800" opacity=".4"/>
</g>
<rect x="0" y="0" width="240" height="2" fill="#2a8800"/>
<rect x="0" y="150" width="240" height="5" fill="#127a00"/>
</svg>
<rect x="138" width="838" height="155" filter="url(#nG)" opacity=".6"/>
<rect x="138" width="838" height="155" filter="url(#nY)" opacity=".4"/>
<g transform="translate(138,0)"><path class="g" d="M69.8 0V155M139.7 0V155M209.5 0V155M279.3 0V155M349.2 0V155M419 0V155M488.8 0V155M558.7 0V155M628.5 0V155M698.3 0V155M768.2 0V155M0 16.8H838M0 32.1H838M0 47.4H838M0 62.7H838M0 78H838M0 93.3H838M0 108.6H838M0 123.9H838M0 139.2H838"/></g>
<rect class="fr" x="138" y="0" width="838" height="155"/>
<g class="tk ye"><text x="131" y="22.3">4</text><text x="131" y="37.6">3</text><text x="131" y="52.9">2</text><text x="131" y="68.2">1</text><text x="131" y="83.5">0</text><text x="131" y="98.8">-1</text><text x="131" y="114.1">-2</text><text x="131" y="129.4">-3</text><text x="131" y="144.7">-4</text><text x="131" y="158.5">-5</text></g>
<g class="tk xm"><text x="207.8" y="175">02</text><text x="277.7" y="175">04</text><text x="347.5" y="175">06</text><text x="417.3" y="175">08</text><text x="487.2" y="175">10</text><text x="557" y="175">12</text><text x="626.8" y="175">14</text><text x="696.7" y="175">16</text><text x="766.5" y="175">18</text><text x="836.3" y="175">20</text><text x="906.2" y="175">22</text></g>
<text class="hu" x="557" y="200">Hours, UTC</text>
<text class="lb" transform="translate(97,78) rotate(-90)">Doppler Shift (Hz)</text>
<g transform="translate(0,249)">
<text class="pt" x="557" y="-5">Peak Amplitude by Minute</text>
<rect x="138" width="838" height="155" fill="#fff"/>
<g transform="translate(138,0)"><path class="g" d="M69.8 0V155M139.7 0V155M209.5 0V155M279.3 0V155M349.2 0V155M419 0V155M488.8 0V155M558.7 0V155M628.5 0V155M698.3 0V155M768.2 0V155M0 135.1H838M0 115.2H838M0 95.3H838M0 75.4H838M0 55.5H838M0 35.6H838M0 15.7H838"/></g>
<svg x="138" y="0" width="838" height="155" viewBox="0 0 240 100" preserveAspectRatio="none"><polyline class="ln" vector-effect="non-scaling-stroke" points="0,56 1,38 2,58 3,52 4,60 5,54 6,58 7,55 8,60 9,56 10,58 11,54 12,60 13,55 14,58 15,56 16,60 17,52 18,44 19,58 20,56 21,60 22,58 23,61 24,57 25,60 26,58 27,56 28,54 29,30 30,5 31,12 32,46 33,50 34,56 35,60 36,58 37,62 38,56 39,54 40,60 41,56 42,52 43,56 44,28 45,58 46,44 47,60 48,56 49,60 50,57 51,61 52,58 53,60 54,56 55,58 56,52 57,54 58,26 59,56 60,48 61,58 62,60 63,62 64,58 65,62 66,60 67,64 68,60 69,62 70,66 71,62 72,64 73,60 74,64 75,68 76,62 77,66 78,64 79,68 80,64 81,66 82,62 83,68 84,64 85,66 86,62 87,68 88,64 89,66 90,60 91,66 92,62 93,68 94,66 95,52 96,64 97,68 98,62 99,66 100,64 101,68 102,62 103,66 104,64 105,68 106,62 107,66 108,64 109,66 110,62 111,68 112,64 113,66 114,62 115,66 116,60 117,64 118,60 119,50 120,62 121,64 122,60 123,56 124,58 125,54 126,56 127,50 128,54 129,50 130,52 131,46 132,36 133,50 134,46 135,52 136,48 137,44 138,50 139,46 140,48 141,44 142,50 143,46 144,48 145,42 146,46 147,48 148,44 149,46 150,42 151,48 152,44 153,46 154,40 155,44 156,36 157,34 158,42 159,30 160,44 161,56 162,60 163,54 164,56 165,40 166,50 167,30 168,48 169,44 170,34 171,50 172,56 173,30 174,46 175,36 176,48 177,38 178,14 179,40 180,50 181,38 182,44 183,30 184,46 185,34 186,44 187,38 188,50 189,30 190,44 191,40 192,50 193,36 194,42 195,46 196,44 197,52 198,48 199,36 200,26 201,44 202,50 203,40 204,44 205,30 206,42 207,48 208,40 209,46 210,42 211,32 212,44 213,40 214,46 215,42 216,44 217,40 218,46 219,36 220,44 221,40 222,36 223,14 224,40 225,44 226,38 227,46 228,42 229,48 230,40 231,46 232,44 233,48 234,42 235,46 236,40 237,44 238,42 239,40 240,44"/></svg>
<rect class="fr" x="138" y="0" width="838" height="155"/>
<g class="tk ye"><text x="132" y="160.5">0.0000000</text><text x="132" y="140.6">0.0000005</text><text x="132" y="120.7">0.0000010</text><text x="132" y="100.8">0.0000015</text><text x="132" y="80.9">0.0000020</text><text x="132" y="61">0.0000025</text><text x="132" y="41.1">0.0000030</text><text x="132" y="21.2">0.0000035</text></g>
<g class="tk xm"><text x="138" y="175">00</text><text x="207.8" y="175">02</text><text x="277.7" y="175">04</text><text x="347.5" y="175">06</text><text x="417.3" y="175">08</text><text x="487.2" y="175">10</text><text x="557" y="175">12</text><text x="626.8" y="175">14</text><text x="696.7" y="175">16</text><text x="766.5" y="175">18</text><text x="836.3" y="175">20</text><text x="906.2" y="175">22</text><text x="976" y="175">24</text></g>
<text class="hu" x="557" y="200">Hours, UTC</text>
<text class="lb" transform="translate(24,77.5) rotate(-90)">Amplitude, uncalibrated units</text>
</g>
</g>
</svg>
</body></html>
